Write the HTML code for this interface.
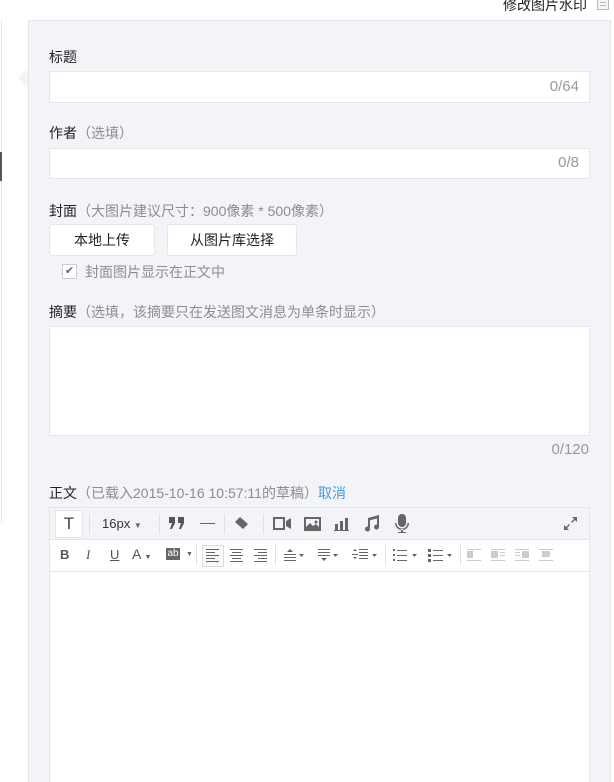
<!DOCTYPE html>
<html><head><meta charset="utf-8"><style>
*{margin:0;padding:0;box-sizing:border-box}
html,body{width:614px;height:782px;overflow:hidden}
body{background:#fff;font-family:"Liberation Sans","Noto Sans CJK SC",sans-serif;font-size:14px;color:#222;position:relative}
.a{position:absolute}
.panel{left:28px;top:20px;width:583px;height:790px;background:#f3f4f8;border:1px solid #e4e6eb}
.inp{position:absolute;left:49px;width:541px;background:#fff;border:1px solid #e4e6eb}
.cnt{position:absolute;right:10px;color:#999;font-size:15px}
.lbl{position:absolute;left:49px;font-size:14px;color:#222}
.lbl span{color:#8d8d8d}
.btn{position:absolute;top:224px;height:32px;background:#fff;border:1px solid #e4e6eb;border-radius:3px;text-align:center;line-height:30px;font-size:14px;color:#222}
.ic{position:absolute;fill:#666}
.sep{position:absolute;width:1px;background:#e0e0e0}
</style></head><body>
<div class="a" style="left:1px;top:20px;width:1px;height:502px;background:#e4e6eb"></div>
<div class="a" style="left:0;top:152px;width:2px;height:29px;background:#555"></div>
<div class="a" style="right:27px;top:-5px;font-size:14px;color:#222">修改图片水印</div>
<div class="a" style="left:597px;top:0;width:12px;height:10px;border:1px solid #bbb;border-top:none;background:#f4f4f4"><div style="margin:2px 2px 0;height:1px;background:#bbb"></div><div style="margin:2px 2px 0;height:1px;background:#bbb"></div></div>
<div class="a panel"></div>
<div class="a" style="left:18px;top:68px;width:0;height:0;border-top:10px solid transparent;border-bottom:10px solid transparent;border-right:10px solid #f3f4f8"></div>

<div class="lbl" style="top:47px">标题</div>
<div class="inp" style="top:71px;height:32px"><div class="cnt" style="top:6px">0/64</div></div>
<div class="lbl" style="top:123px">作者<span>（选填）</span></div>
<div class="inp" style="top:148px;height:31px"><div class="cnt" style="top:5px">0/8</div></div>
<div class="lbl" style="top:201px">封面<span>（大图片建议尺寸：900像素 * 500像素）</span></div>
<div class="btn" style="left:49px;width:106px">本地上传</div>
<div class="btn" style="left:167px;width:130px">从图片库选择</div>
<div class="a" style="left:62px;top:264px;width:15px;height:15px;border:1px solid #ccc;background:#fff;color:#666;font-size:11px;line-height:13px;text-align:center">✔</div>
<div class="a" style="left:85px;top:262px;color:#8d8d8d;font-size:14px">封面图片显示在正文中</div>
<div class="lbl" style="top:302px">摘要<span>（选填，该摘要只在发送图文消息为单条时显示）</span></div>
<div class="inp" style="top:326px;height:110px"></div>
<div class="a" style="right:25px;top:441px;color:#999;font-size:15px">0/120</div>
<div class="lbl" style="top:483px">正文<span>（已载入2015-10-16 10:57:11的草稿）</span><b style="font-weight:normal;color:#459ae9">取消</b></div>

<div class="inp" style="top:507px;height:300px"></div>
<div class="a" style="left:50px;top:508px;width:539px;height:32px;background:#f3f4f8;border-bottom:1px solid #e4e6eb"></div>
<div class="a" style="left:55px;top:510px;width:28px;height:28px;background:#fff;border:1px solid #e4e6eb;text-align:center;line-height:26px;font-size:17px;color:#444">T</div>
<div class="sep" style="top:514px;left:89px;height:20px"></div>
<div class="a" style="left:102px;top:516px;font-size:13px;color:#333">16px <span style="font-size:8px;color:#666">▼</span></div>
<div class="sep" style="top:514px;left:159px;height:20px"></div>
<svg class="ic" style="left:169px;top:517px" width="16" height="12"><path d="M0 0h6v6l-3 6H1l2-6H0z M9 0h6v6l-3 6h-2l2-6H9z" fill="#555"/></svg>
<div class="a" style="left:200px;top:523px;width:15px;height:1px;background:#666"></div>
<div class="sep" style="top:514px;left:224px;height:20px"></div>
<svg class="ic" style="left:233px;top:516px" width="16" height="16" viewBox="0 0 16 16"><path d="M7 1 L15 8 L10 13 L2 6 Z"/></svg>
<div class="sep" style="top:514px;left:263px;height:20px"></div>
<svg class="ic" style="left:273px;top:517px" width="18" height="13"><path d="M0 0h12v13H0z M2 2v9h8V2z M13 4l5-3v11l-5-3z"/></svg>
<svg class="ic" style="left:304px;top:517px" width="17" height="14"><path d="M0 0h17v14H0z M2 2v8l4-4 3 3 3-2 3 3V2z"/><circle cx="12" cy="5" r="1.5"/></svg>
<svg class="ic" style="left:334px;top:516px" width="15" height="15"><path d="M1 8h3v6H1z M6 5h3v9H6z M11 2h3v12h-3z M0 14h15v1H0z"/></svg>
<svg class="ic" style="left:364px;top:515px" width="16" height="17"><path d="M4 3l11-3v12a2.5 2.5 0 1 1-2-2.4V3.5L6 5.3V14a2.5 2.5 0 1 1-2-2.4z"/></svg>
<svg class="ic" style="left:394px;top:514px" width="16" height="20"><rect x="4" y="0" width="8" height="13" rx="4"/><path d="M1 9a7 7 0 0 0 14 0h-1.5a5.5 5.5 0 0 1-11 0z M7 15h2v3h3v1H4v-1h3z"/></svg>
<svg class="ic" style="left:564px;top:517px" width="13" height="13"><path d="M8 0h5v5l-2-2-3 3-1-1 3-3z M0 8l2 2 3-3 1 1-3 3 2 2H0z"/></svg>

<div style="position:absolute;left:50px;top:571px;width:539px;height:1px;background:#e4e6eb"></div>
<div class="a" style="left:60px;top:547px;font-size:13px;font-weight:bold;color:#555">B</div>
<div class="a" style="left:86px;top:547px;font-size:13px;font-style:italic;color:#555;font-family:'Liberation Serif'">I</div>
<div class="a" style="left:110px;top:547px;font-size:13px;text-decoration:underline;color:#555">U</div>
<div class="a" style="left:132px;top:546px;font-size:14px;color:#555">A <span style="font-size:7px">▼</span></div>
<div class="a" style="left:166px;top:548px;width:14px;height:12px;background:#666;color:#fff;font-size:10px;line-height:12px;text-align:center">ab</div>
<div class="a" style="left:186px;top:551px;font-size:7px;color:#666">▼</div>
<div class="sep" style="top:545px;left:196px;height:20px"></div>
<div class="a" style="left:202px;top:545px;width:22px;height:22px;border:1px solid #ddd;background:#fafafa"></div>
<svg class="ic" style="left:206px;top:549px" width="90" height="13"><g fill="#666"><rect x="0" y="0" width="13" height="1"/><rect x="0" y="3" width="9" height="1"/><rect x="0" y="6" width="13" height="1"/><rect x="0" y="9" width="9" height="1"/><rect x="0" y="12" width="13" height="1"/>
<rect x="24" y="0" width="13" height="1"/><rect x="26" y="3" width="9" height="1"/><rect x="24" y="6" width="13" height="1"/><rect x="26" y="9" width="9" height="1"/><rect x="24" y="12" width="13" height="1"/>
<rect x="48" y="0" width="13" height="1"/><rect x="52" y="3" width="9" height="1"/><rect x="48" y="6" width="13" height="1"/><rect x="52" y="9" width="9" height="1"/><rect x="48" y="12" width="13" height="1"/></g></svg>
<div class="sep" style="top:545px;left:275px;height:20px"></div>
<svg class="ic" style="left:284px;top:549px" width="100" height="13"><g fill="#666">
<path d="M6 0l3 3H3z"/><rect x="0" y="5" width="12" height="1"/><rect x="0" y="8" width="12" height="1"/><rect x="0" y="11" width="12" height="1"/>
<rect x="34" y="0" width="12" height="1"/><rect x="34" y="3" width="12" height="1"/><rect x="34" y="6" width="12" height="1"/><path d="M37 9h6l-3 3z"/>
<path d="M71 0l2 2h-4z M69 8h4l-2 2z"/><rect x="75" y="0" width="9" height="1"/><rect x="75" y="3" width="9" height="1"/><rect x="75" y="6" width="9" height="1"/><rect x="75" y="9" width="9" height="1"/><rect x="68" y="5" width="6" height="1"/>
</g><g fill="#666"><path d="M15 5h5l-2.5 3z M49 5h5l-2.5 3z M88 5h5l-2.5 3z"/></g></svg>
<div class="sep" style="top:545px;left:385px;height:20px"></div>
<svg class="ic" style="left:393px;top:549px" width="70" height="13"><g fill="#666">
<rect x="0" y="0" width="2" height="2"/><rect x="0" y="5" width="2" height="2"/><rect x="0" y="10" width="2" height="2"/><rect x="4" y="1" width="10" height="1"/><rect x="4" y="6" width="10" height="1"/><rect x="4" y="11" width="10" height="1"/>
<path d="M19 5h5l-2.5 3z"/>
<rect x="35" y="0" width="3" height="3"/><rect x="35" y="5" width="3" height="3"/><rect x="35" y="10" width="3" height="3"/><rect x="40" y="1" width="10" height="1"/><rect x="40" y="6" width="10" height="1"/><rect x="40" y="11" width="10" height="1"/>
<path d="M54 5h5l-2.5 3z"/></g></svg>
<div class="sep" style="top:545px;left:460px;height:20px"></div>
<svg style="position:absolute;left:467px;top:549px" width="90" height="13"><g fill="#ccc"><rect x="0" y="2" width="6" height="7"/><rect x="0" y="11" width="14" height="1"/><rect x="0" y="0" width="14" height="1"/>
<rect x="24" y="0" width="14" height="1"/><rect x="24" y="2" width="7" height="7"/><rect x="33" y="3" width="5" height="1"/><rect x="33" y="6" width="5" height="1"/><rect x="24" y="11" width="14" height="1"/>
<rect x="48" y="0" width="14" height="1"/><rect x="55" y="2" width="7" height="7"/><rect x="48" y="3" width="5" height="1"/><rect x="48" y="6" width="5" height="1"/><rect x="48" y="11" width="14" height="1"/>
<rect x="72" y="0" width="14" height="1"/><rect x="75" y="2" width="8" height="6"/><rect x="72" y="11" width="14" height="1"/></g></svg>
</body></html>
